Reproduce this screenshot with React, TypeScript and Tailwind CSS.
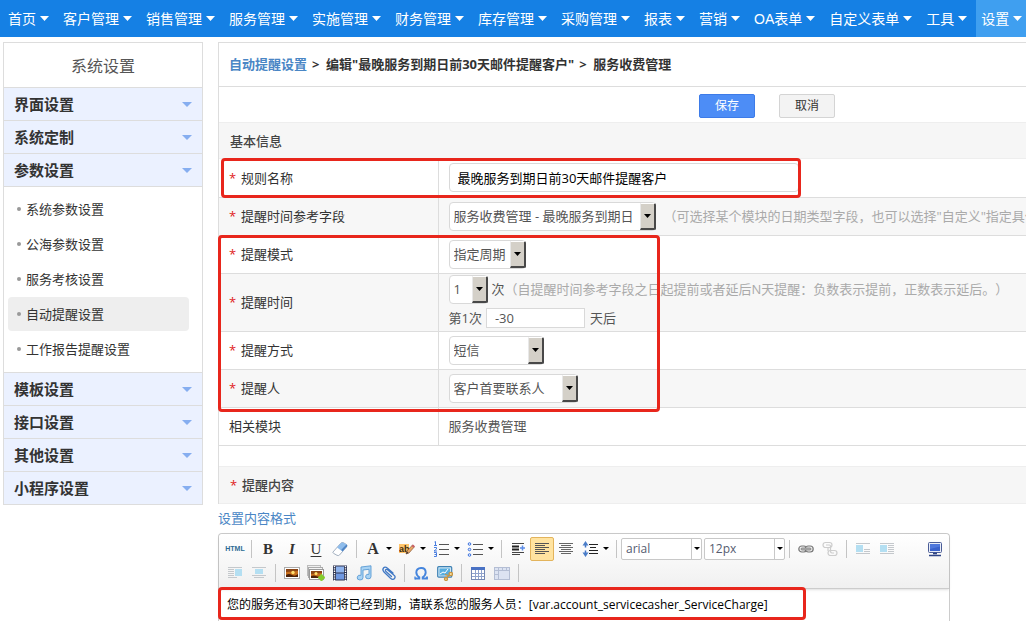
import React, { useState } from 'react';

const navItems = [
  '首页',
  '客户管理',
  '销售管理',
  '服务管理',
  '实施管理',
  '财务管理',
  '库存管理',
  '采购管理',
  '报表',
  '营销',
  'OA表单',
  '自定义表单',
  '工具',
  '设置',
];

const menuGroups: { title: string; items?: string[] }[] = [
  { title: '界面设置' },
  { title: '系统定制' },
  {
    title: '参数设置',
    items: ['系统参数设置', '公海参数设置', '服务考核设置', '自动提醒设置', '工作报告提醒设置'],
  },
  { title: '模板设置' },
  { title: '接口设置' },
  { title: '其他设置' },
  { title: '小程序设置' },
];

const Caret: React.FC<{ className?: string }> = ({ className = '' }) => (
  <svg viewBox="0 0 10 5" className={className} fill="currentColor" preserveAspectRatio="none" aria-hidden="true">
    <path d="M0 0h10L5 5z" />
  </svg>
);

const Icon: React.FC<{ children: React.ReactNode }> = ({ children }) => (
  <svg width="16" height="16" viewBox="0 0 16 16" fill="none" aria-hidden="true">
    {children}
  </svg>
);

/* ---------- toolbar icons ---------- */

const EraserIcon = () => (
  <Icon>
    <path d="M1 11 8.500 2.500Q9.500 1.200 11 1.500L14.500 3.500Q15.600 4.500 14.500 6L7.500 14Q6.500 15 5 14.300L1.500 12.300Q.6 11.700 1 11z" fill="#fff" stroke="#8b9cb0" strokeWidth=".8" />
    <path d="m5 6.500 3.500-4Q9.500 1.200 11 1.500L14.500 3.500Q15.600 4.500 14.500 6L10.500 10.500z" fill="#8fbdec" />
    <path d="M10.500 10.500 15 5.300Q15.400 4.300 14.500 3.500L9.300 8.800z" fill="#4f84c4" />
  </Icon>
);

const HighlightIcon = () => (
  <svg width="16" height="16" viewBox="0 0 16 16" aria-hidden="true">
    <rect x="0" y="3" width="10" height="9" fill="#ffc66d" />
    <text x="0" y="11" fontSize="9" fontWeight="700" fontFamily="Liberation Sans, Arial, sans-serif" fill="#3a2a10">ab</text>
    <path d="m7 13 1-3 5.500-6 2 1.700L10 12z" fill="#e8a765" stroke="#8a5a3a" strokeWidth=".7" />
    <path d="m7 13 1-2.500L9.500 12z" fill="#333" />
    <path d="m12.500 5 1.500-1.600 1.900 1.800L14.500 6.800z" fill="#c9606a" />
  </svg>
);

const OrderedIcon = () => (
  <Icon>
    <path d="M1.500 1 2.500.5v4M1 4.500h3M1 6.500h2.500v1.500L1 10h3M1 11.500h2.500v4H1M1.500 13.500h2" stroke="#4b7fe0" />
    <path d="M6 3.500h10M6 8.500h10M6 13.500h10" stroke="#555" />
  </Icon>
);

const BulletIcon = () => (
  <Icon>
    <g fill="#dfe9ff" stroke="#3f74dd">
      <circle cx="2.500" cy="3" r="1.300" />
      <circle cx="2.500" cy="8.500" r="1.300" />
      <circle cx="2.500" cy="14" r="1.300" />
    </g>
    <path d="M6 3.500h10M6 8.500h10M6 13.500h10" stroke="#555" />
  </Icon>
);

const IndentIcon = () => (
  <Icon>
    <path d="M2 2.500h12M2 11.500h12M2 13.500h8" stroke="#444" />
    <path d="M2 5.500h7M2 8.500h7" stroke="#222" strokeWidth="2" />
    <path d="M10 7h5M12.500 4.500v5" stroke="#5b8ce8" strokeWidth="1.500" />
  </Icon>
);

const AlignLeftIcon = () => (
  <Icon>
    <path d="M1 2.500h14M1 4.500h10M1 6.500h14M1 8.500h10M1 10.500h14M1 12.500h10" stroke="#555" />
  </Icon>
);

const AlignCenterIcon = () => (
  <Icon>
    <path d="M1 2.500h14M3 4.500h10M1 6.500h14M3 8.500h10M1 10.500h14M3 12.500h10" stroke="#666" />
  </Icon>
);

const LineHeightIcon = () => (
  <Icon>
    <path d="M3.500 3v3.500M3.500 9.500V13" stroke="#3f74c8" strokeWidth="1.500" />
    <path d="M.5 4.500 3.500 0l3 4.500zM.5 11.500l3 4.500 3-4.500z" fill="#4b7dc8" />
    <path d="M7 3.500h9M8 6.500h6M7 9.500h9M7 12.500h9" stroke="#222" />
  </Icon>
);

const LinkIcon = () => (
  <Icon>
    <g stroke="#777" strokeWidth="1.200" fill="#eee">
      <rect x=".8" y="5" width="8" height="6" rx="3" />
      <rect x="7.200" y="5" width="8" height="6" rx="3" />
      <rect x="3" y="7" width="10" height="2" rx="1" fill="#bbb" strokeWidth=".8" />
    </g>
  </Icon>
);

const UnlinkIcon = () => (
  <Icon>
    <g stroke="#cdcdcd" strokeWidth="1.200">
      <rect x="1" y="1.500" width="9" height="5" rx="2.500" />
      <rect x="6" y="9.500" width="9" height="5" rx="2.500" />
      <path d="M4 4h3.500Q8.500 4 8.500 5.500V10Q8.500 12 10 12h2M6 6v4" />
    </g>
  </Icon>
);

const FloatLeftIcon = () => (
  <Icon>
    <path d="M1 2.500h14M9 8.500h6M9 10.500h6M1 12.500h14" stroke="#c4c8cc" />
    <rect x="1" y="4" width="7" height="7" fill="#b4dff2" />
  </Icon>
);

const FloatBlockIcon = () => (
  <Icon>
    <path d="M1 2.500h14M9 4.500h6M9 6.500h6M9 8.500h6M9 10.500h6M1 12.500h14" stroke="#c4c8cc" />
    <rect x="1" y="4" width="7" height="7" fill="#b4dff2" />
  </Icon>
);

const FloatRightIcon = () => (
  <Icon>
    <path d="M1 2.500h14M1 4.500h6M1 6.500h6M1 8.500h6M1 10.500h6M1 12.500h9" stroke="#c4c8cc" />
    <rect x="8" y="4" width="7" height="7" fill="#b4dff2" />
  </Icon>
);

const FloatCenterIcon = () => (
  <Icon>
    <path d="M1 2.500h14M1 10.500h14M3 12.500h10" stroke="#c4c8cc" />
    <rect x="4" y="4" width="8" height="5" fill="#b4dff2" />
  </Icon>
);

const MonitorIcon = () => (
  <Icon>
    <rect x="1.500" y="1.500" width="13" height="10" rx="1" fill="#e8edf8" stroke="#4a5c96" />
    <rect x="3" y="3" width="10" height="7" fill="#3a62cc" />
    <path d="M3 3h10v2.500L3 8z" fill="#4f78dc" />
    <path d="M6 12.500h4M2 14.500h12" stroke="#2e4486" strokeWidth="1.300" />
  </Icon>
);

const PictureIcon = () => (
  <Icon>
    <rect x=".5" y="2.500" width="15" height="11" fill="#fff" stroke="#aaa" />
    <rect x="2" y="4" width="12" height="8" fill="#c8701e" />
    <path d="M2 4h12v2L2 7z" fill="#8a4414" />
    <circle cx="9" cy="7.500" r="1.700" fill="#ffdf70" />
    <path d="M2 10q3-2 6 0t6-1v3H2z" fill="#4a2008" />
  </Icon>
);

const PicturesIcon = () => (
  <svg width="18" height="16" viewBox="0 0 18 16" aria-hidden="true">
    <rect x=".5" y=".5" width="13" height="10" fill="#eee" stroke="#bbb" />
    <rect x="1.500" y="2.500" width="14" height="10" fill="#f4f4f4" stroke="#aaa" />
    <rect x="2.500" y="4.500" width="14" height="10" fill="#fff" stroke="#999" />
    <rect x="4" y="6" width="11" height="7" fill="#c8701e" />
    <path d="M4 6h11v2L4 9z" fill="#8a4414" />
    <circle cx="9" cy="8.500" r="1.500" fill="#ffdf70" />
    <path d="M4 11q3-1 5 0t6 0v2H4z" fill="#4a2008" />
    <path d="M14.500 10.500v4M12.500 12.500h4" stroke="#84cc2c" strokeWidth="3" strokeLinecap="round" />
  </svg>
);

const FilmIcon = () => (
  <Icon>
    <rect x="1" y=".5" width="14" height="15" fill="#2c3350" />
    <rect x="4" y="1.500" width="8" height="6" fill="#8fb4ee" />
    <rect x="4" y="8.500" width="8" height="6" fill="#6f98e2" />
    <path d="M2.500 1v15M13.500 1v15" stroke="#fff" strokeWidth="1.400" strokeDasharray="1.300 1" />
  </Icon>
);

const MusicIcon = () => (
  <Icon>
    <path d="M5 2 15 .8V11.500a2.700 2.300 0 1 1-2-2.200V4.300L7 5v7.500a2.900 2.400 0 1 1-2-2.200z" fill="#a9d3f4" stroke="#5a9bd4" strokeWidth=".9" />
  </Icon>
);

const ClipIcon = () => (
  <Icon>
    <path d="M13 8 7.500 3.200Q5 1.200 3.500 3T4 7L10.500 13.200Q13 15.300 14.500 13.500T13.800 10L7.500 4.800Q6 4 5.500 5T6 6.500L11.500 11.500" stroke="#4078c4" strokeWidth="1.300" strokeLinecap="round" />
  </Icon>
);

const OmegaIcon = () => (
  <Icon>
    <path d="M2 13.500h4.300V12.200Q3.300 10.300 3.300 7.300 3.500 3.200 8 3t4.700 4.300q0 3-3 4.900v1.300H14V11.500" stroke="#4585dd" strokeWidth="1.900" />
    <path d="M2 14.400v-3" stroke="#4585dd" strokeWidth="1.300" />
  </Icon>
);

const RemoteImageIcon = () => (
  <Icon>
    <rect x=".7" y="1.700" width="14" height="10.500" rx="1" fill="#cfe7f6" stroke="#3f82b4" strokeWidth="1.200" />
    <rect x="2.500" y="3.500" width="10.500" height="7" fill="#57aee0" />
    <path d="m3 9 3-2 2 1 3-4" stroke="#fff" />
    <g stroke="#c89440" strokeWidth="1.300" fill="#f8dfa0">
      <circle cx="13.800" cy="9" r="1.700" />
      <circle cx="9" cy="14" r="1.500" />
      <path d="m8 9.500 5 1.500M11.500 11 9.500 13" />
    </g>
  </Icon>
);

const TableIcon = () => (
  <Icon>
    <rect x="1.500" y="2.500" width="13" height="12" fill="#fff" stroke="#7488b4" />
    <rect x="1" y="2" width="14" height="3" fill="#4a72c4" />
    <path d="M2 8.500h12M2 11.500h12M5.500 5v9M8.500 5v9M11.500 5v9" stroke="#8fa2cc" />
  </Icon>
);

const TableGrayIcon = () => (
  <Icon>
    <rect x=".5" y="2.500" width="15" height="12" fill="#dce3f2" stroke="#b4bed4" />
    <path d="M1 5.500h14M4.500 3v11M8.500 3v3M12.500 3v3M1 9.500h3" stroke="#b4bed4" />
  </Icon>
);

/* ---------- small controls ---------- */

const ToolButton: React.FC<{ label: string; active?: boolean; children: React.ReactNode }> = ({
  label,
  active,
  children,
}) => (
  <button
    type="button"
    title={label}
    aria-label={label}
    className={`flex items-center justify-center w-6 h-6 shrink-0 ${
      active ? 'border border-[#e3b45c] bg-[#ffe3a0] rounded-xs' : ''
    }`}
  >
    {children}
  </button>
);

const DropButton: React.FC<{ label: string; children: React.ReactNode }> = ({ label, children }) => (
  <button type="button" title={label} aria-label={label} className="flex items-center w-[34px] h-6 pl-1 gap-[5px] shrink-0">
    <span className="flex items-center justify-center w-4">{children}</span>
    <Caret className="w-[6px] h-[3px] text-black" />
  </button>
);

const Separator = () => <span className="w-px h-[18px] mx-1 bg-[#c4c4c4] shrink-0" />;

const ToolSelect: React.FC<{ label: string; value: string }> = ({ label, value }) => (
  <span className="relative flex w-[81px] h-[22px] shrink-0">
    <select
      aria-label={label}
      defaultValue={value}
      className="appearance-none w-full h-full pl-1 border border-[#c8c8c8] rounded-xs bg-white text-xs text-[#555c70]"
    >
      <option>{value}</option>
    </select>
    <span className="absolute right-0 inset-y-0 w-[11px] flex items-center justify-center border-l border-[#c8c8c8] pointer-events-none">
      <Caret className="w-[6px] h-[3px] text-black" />
    </span>
  </span>
);

const FormSelect: React.FC<{ id: string; value: string; width: string }> = ({ id, value, width }) => (
  <span className={`relative inline-flex align-middle h-[29px] shrink-0 ${width}`}>
    <select
      id={id}
      defaultValue={value}
      className="appearance-none w-full h-full pl-1 border border-[#d9d9d9] rounded-sm bg-white text-[13px] text-[#555]"
    >
      <option>{value}</option>
    </select>
    <span className="absolute right-0 top-px bottom-px w-4 flex items-center justify-center bg-[#d4d0c8] border-t border-l border-t-white border-l-[#e8e8e8] border-r-2 border-b-2 border-r-[#484848] border-b-[#484848] rounded-r-xs pointer-events-none">
      <Caret className="w-[7px] h-1 text-black" />
    </span>
  </span>
);

const FormRow: React.FC<{
  label: string;
  htmlFor?: string;
  required?: boolean;
  tall?: boolean;
  children: React.ReactNode;
}> = ({ label, htmlFor, required, tall, children }) => (
  <tr className={`${tall ? 'h-[58px]' : 'h-[38px]'} border-b border-[#ddd] even:bg-[#f7f7f7]`}>
    <th scope="row" className="border-r border-[#ddd] pl-[10px] text-left font-normal text-[#333]">
      <label htmlFor={htmlFor} className="flex items-center">
        {required && <span className="w-3 text-[#e02020]">*</span>}
        {label}
      </label>
    </th>
    <td className="pl-[10px] whitespace-nowrap text-[#555]">{children}</td>
  </tr>
);

const Highlight: React.FC<{ className: string }> = ({ className }) => (
  <div className={`absolute border-3 border-[#e8261c] rounded-sm pointer-events-none ${className}`} />
);

const App: React.FC = () => {
  const [current, setCurrent] = useState('自动提醒设置');
  const [ruleName, setRuleName] = useState('最晚服务到期日前30天邮件提醒客户');
  const [content, setContent] = useState(
    '您的服务还有30天即将已经到期，请联系您的服务人员：[var.account_servicecasher_ServiceCharge]'
  );

  return (
    <div className="flex flex-col min-h-screen overflow-hidden bg-white text-[13px] leading-5 text-[#333] font-['Open_Sans','Noto_Sans_CJK_SC',sans-serif] [text-spacing-trim:space-all]">
      <nav className="flex h-[37px] pl-[3px] bg-[#1580e4] text-sm text-white overflow-hidden font-['Liberation_Sans','Noto_Sans_CJK_SC',sans-serif]">
        {navItems.map((item) => (
          <a
            key={item}
            href="#"
            className={`flex items-center gap-1 pl-[5px] pr-[9px] shrink-0 whitespace-nowrap ${
              item === '设置' ? 'bg-[#3f9ff0]' : ''
            }`}
          >
            {item}
            <Caret className="w-[9px] h-[5px]" />
          </a>
        ))}
      </nav>

      <div className="flex flex-1 items-stretch pt-[5px] pl-[3px]">
        <aside className="w-[200px] shrink-0 self-start border border-[#ddd]">
          <h2 className="h-11 pt-px flex items-center justify-center text-base text-[#555]">系统设置</h2>
          {menuGroups.map((group) => (
            <div key={group.title}>
              <button
                type="button"
                className="flex items-center justify-between w-full h-[33px] px-[10px] border-t border-[#ddd] bg-[#ebf1ff] text-[15px] font-bold"
              >
                {group.title}
                <Caret className="w-[10px] h-[5px] text-[#86aef0]" />
              </button>
              {group.items && (
                <ul className="flex flex-col gap-px pt-[5px] pb-[6px] pl-1 pr-[13px] border-t border-[#ddd]">
                  {group.items.map((item) => (
                    <li key={item}>
                      <a
                        href="#"
                        onClick={() => setCurrent(item)}
                        className={`flex items-center gap-[5px] h-[34px] pl-[9px] rounded-sm ${
                          item === current ? 'bg-[#eee]' : ''
                        }`}
                      >
                        <span className="size-1 rounded-full bg-[#999]" />
                        {item}
                      </a>
                    </li>
                  ))}
                </ul>
              )}
            </div>
          ))}
        </aside>

        <main className="relative flex flex-col flex-1 min-w-0 ml-[15px]">
          <form className="flex flex-col border-t border-l border-[#ddd]">
            <div className="flex items-center gap-[5px] h-11 pl-[10px] pb-[2px] border-b border-[#ddd] font-bold whitespace-nowrap">
              <a href="#" className="text-[#4a86c5]">自动提醒设置</a>
              <span className="w-[9px]">&gt;</span>
              <span>编辑"最晚服务到期日前30天邮件提醒客户"</span>
              <span className="w-[9px]">&gt;</span>
              <span>服务收费管理</span>
            </div>

            <div className="flex items-center gap-6 h-[35px] pt-[2px] pl-[480px] text-xs">
              <button type="button" className="w-14 h-6 rounded-xs border border-[#3d7be8] bg-[#4d8df6] text-white">
                保存
              </button>
              <button type="button" className="w-14 h-6 rounded-xs border border-[#d4d4d4] bg-[#f3f3f3] text-[#333]">
                取消
              </button>
            </div>

            <h3 className="flex items-center h-[37px] pl-[11px] border-y border-[#eee] bg-[#f6f6f6] font-medium text-[#444]">
              基本信息
            </h3>

            <table className="w-full table-fixed border-collapse">
              <colgroup>
                <col className="w-[219px]" />
                <col />
              </colgroup>
              <tbody>
                <FormRow label="规则名称" htmlFor="rule-name" required>
                  <input
                    id="rule-name"
                    value={ruleName}
                    onChange={(e) => setRuleName(e.target.value)}
                    className="block w-[350px] h-[29px] px-2 border border-[#d9d9d9] rounded-sm bg-white text-black"
                  />
                </FormRow>
                <FormRow label="提醒时间参考字段" htmlFor="ref-field" required>
                  <div className="flex items-center gap-2">
                    <FormSelect id="ref-field" value="服务收费管理 - 最晚服务到期日" width="w-[207px]" />
                    <span className="text-[#aaa]">（可选择某个模块的日期类型字段，也可以选择"自定义"指定具体</span>
                  </div>
                </FormRow>
                <FormRow label="提醒模式" htmlFor="mode" required>
                  <FormSelect id="mode" value="指定周期" width="w-[77px]" />
                </FormRow>
                <FormRow label="提醒时间" htmlFor="times" required tall>
                  <div className="flex items-center gap-1">
                    <FormSelect id="times" value="1" width="w-[39px]" />
                    <span>
                      次<span className="text-[#aaa]">（自提醒时间参考字段之日起提前或者延后N天提醒：负数表示提前，正数表示延后。）</span>
                    </span>
                  </div>
                  <div className="flex items-center gap-1 pt-1 pb-[2px]">
                    <label htmlFor="offset">第1次</label>
                    <input
                      id="offset"
                      defaultValue="-30"
                      className="w-[99px] h-5 px-2 mr-px border border-[#d9d9d9] bg-white"
                    />
                    天后
                  </div>
                </FormRow>
                <FormRow label="提醒方式" htmlFor="method" required>
                  <FormSelect id="method" value="短信" width="w-[95px]" />
                </FormRow>
                <FormRow label="提醒人" htmlFor="receiver" required>
                  <FormSelect id="receiver" value="客户首要联系人" width="w-[129px]" />
                </FormRow>
                <FormRow label="相关模块">服务收费管理</FormRow>
              </tbody>
            </table>

            <h3 className="flex items-center h-[38px] mt-5 pl-[11px] border-y border-[#eee] bg-[#f6f6f6] font-medium text-[#444]">
              <span className="w-3 text-[#e02020]">*</span>
              提醒内容
            </h3>
          </form>

          <a href="#" className="flex items-center h-[29px] text-[#4a86c5]">设置内容格式</a>

          <section className="flex flex-col flex-1 max-w-[732px] border border-b-0 border-[#ccc] rounded-t-sm">
            <div className="pt-[3px] pb-[3px] pl-1 pr-[2px] border-b border-[#ccc] bg-linear-to-b from-white to-[#f0f0f0] shadow-sm rounded-t-sm">
              <div className="flex items-center">
                <ToolButton label="HTML代码">
                  <span className="font-['Liberation_Sans',sans-serif] text-[7px] font-bold text-[#2d6a94]">HTML</span>
                </ToolButton>
                <Separator />
                <ToolButton label="粗体">
                  <span className="font-['Liberation_Serif',serif] text-[15px] font-bold">B</span>
                </ToolButton>
                <ToolButton label="斜体">
                  <span className="font-['Liberation_Serif',serif] text-[15px] font-bold italic">I</span>
                </ToolButton>
                <ToolButton label="下划线">
                  <span className="font-['Liberation_Serif',serif] text-[15px] underline underline-offset-2">U</span>
                </ToolButton>
                <ToolButton label="删除格式"><EraserIcon /></ToolButton>
                <Separator />
                <DropButton label="文字颜色">
                  <span className="font-['Liberation_Serif',serif] text-base font-bold">A</span>
                </DropButton>
                <DropButton label="文字背景"><HighlightIcon /></DropButton>
                <DropButton label="编号"><OrderedIcon /></DropButton>
                <DropButton label="项目符号"><BulletIcon /></DropButton>
                <Separator />
                <ToolButton label="增加缩进"><IndentIcon /></ToolButton>
                <ToolButton label="左对齐" active><AlignLeftIcon /></ToolButton>
                <ToolButton label="居中"><AlignCenterIcon /></ToolButton>
                <DropButton label="行距"><LineHeightIcon /></DropButton>
                <Separator />
                <div className="flex gap-[2px]">
                  <ToolSelect label="字体" value="arial" />
                  <ToolSelect label="文字大小" value="12px" />
                </div>
                <Separator />
                <ToolButton label="超级链接"><LinkIcon /></ToolButton>
                <ToolButton label="取消超级链接"><UnlinkIcon /></ToolButton>
                <Separator />
                <ToolButton label="左浮动"><FloatLeftIcon /></ToolButton>
                <ToolButton label="默认"><FloatBlockIcon /></ToolButton>
                <span className="ml-auto"><ToolButton label="全屏显示"><MonitorIcon /></ToolButton></span>
              </div>
              <div className="flex items-center">
                <ToolButton label="右浮动"><FloatRightIcon /></ToolButton>
                <ToolButton label="图片居中"><FloatCenterIcon /></ToolButton>
                <Separator />
                <ToolButton label="图片"><PictureIcon /></ToolButton>
                <ToolButton label="多图上传"><PicturesIcon /></ToolButton>
                <ToolButton label="视频"><FilmIcon /></ToolButton>
                <ToolButton label="音乐"><MusicIcon /></ToolButton>
                <ToolButton label="附件"><ClipIcon /></ToolButton>
                <Separator />
                <ToolButton label="特殊字符"><OmegaIcon /></ToolButton>
                <ToolButton label="截图"><RemoteImageIcon /></ToolButton>
                <Separator />
                <ToolButton label="表格"><TableIcon /></ToolButton>
                <ToolButton label="表格属性"><TableGrayIcon /></ToolButton>
                <Separator />
              </div>
            </div>
            <textarea
              aria-label="提醒内容"
              rows={1}
              value={content}
              onChange={(e) => setContent(e.target.value)}
              className="flex-1 w-full px-2 pt-[6px] text-xs leading-5 text-black resize-none outline-none overflow-hidden"
            />
          </section>

          {/* Fields the user has to fill in */}
          <Highlight className="left-[3px] top-[116px] w-[580px] h-10" />
          <Highlight className="left-0 top-[193px] w-[442px] h-[177px]" />
          <Highlight className="left-0 top-[545px] w-[588px] h-[33px]" />
        </main>
      </div>
    </div>
  );
};

export default App;
